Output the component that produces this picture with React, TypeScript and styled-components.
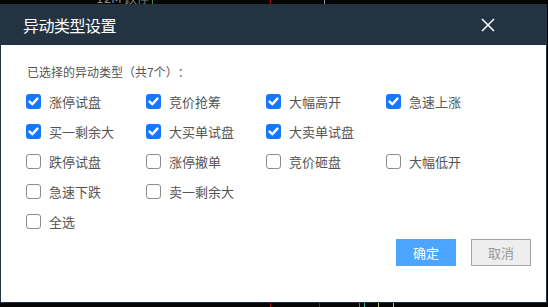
import React, {useState} from 'react';
import styled, {createGlobalStyle} from 'styled-components';

const GlobalStyle = createGlobalStyle`
  html, body {
    margin: 0;
    padding: 0;
    background: #000;
  }
  #root {
    width: 548px;
    height: 307px;
    overflow: hidden;
    font-family: "Noto Sans CJK SC", "Noto Sans", sans-serif;
    text-spacing-trim: space-all;
  }
`;

const Page = styled.div`
  display: flex;
  flex-direction: column;
  width: 548px;
  height: 307px;
  background: #000;
`;

// the quote grid behind the dialog only peeks out above and below it
const BackStrip = styled.div<{height: number}>`
  position: relative;
  height: ${props => props.height}px;
  overflow: hidden;
  background: #050505;
`;

const StripText = styled.span<{left: number}>`
  position: absolute;
  left: ${props => props.left}px;
  bottom: -1px;
  font-size: 12px;
  line-height: 12px;
  color: #8a8a8a;
  font-family: "DejaVu Sans", sans-serif;
`;

const StripMark = styled.span<{left: number; color: string}>`
  position: absolute;
  left: ${props => props.left}px;
  top: 0;
  width: 1px;
  height: 100%;
  background: ${props => props.color};
`;

const Dialog = styled.div`
  width: 547px;
  height: 299px;
  box-sizing: border-box;
  border: 1px solid #243342;
  border-top: none;
  display: flex;
  flex-direction: column;
  background: #fff;
`;

const Header = styled.div`
  height: 41px;
  flex: none;
  background: #243342;
  display: flex;
  align-items: center;
  justify-content: space-between;
  padding: 0 52px 0 23px;
  margin: 0 -1px;
`;

const Title = styled.div`
  color: #fff;
  font-size: 16px;
  line-height: 20px;
  letter-spacing: -0.5px;
`;

const CloseButton = styled.button`
  width: 14px;
  height: 14px;
  padding: 0;
  border: none;
  background: none;
  display: flex;
  cursor: pointer;
`;

const Body = styled.div`
  flex: 1;
  display: flex;
  flex-direction: column;
  padding: 19px 15px 0 25px;
`;

const Caption = styled.div`
  font-size: 12px;
  line-height: 16px;
  color: #555;
  padding-left: 1px;
`;

const OptionGrid = styled.div`
  display: grid;
  grid-template-columns: repeat(4, 120px);
  grid-auto-rows: 30px;
  margin-top: 6px;
`;

const Option = styled.label<{newRow?: boolean}>`
  display: flex;
  align-items: center;
  gap: 8px;
  font-size: 13px;
  color: #555;
  cursor: pointer;
  user-select: none;
  grid-column: ${props => props.newRow ? '1' : 'auto'};
`;

const Box = styled.span<{checked: boolean}>`
  width: 15px;
  height: 15px;
  box-sizing: border-box;
  border-radius: 3px;
  flex: none;
  display: flex;
  align-items: center;
  justify-content: center;
  background: ${props => props.checked ? '#1677ff' : '#fff'};
  border: ${props => props.checked ? 'none' : '1.5px solid #8c8c8c'};
`;

const Footer = styled.div`
  display: flex;
  justify-content: flex-end;
  gap: 15px;
  margin-top: 3px;
`;

const Button = styled.button<{primary?: boolean}>`
  width: 60px;
  height: 27px;
  box-sizing: border-box;
  font-family: inherit;
  font-size: 13px;
  padding: 0;
  cursor: pointer;
  border: ${props => props.primary ? 'none' : '1px solid #a6a6a6'};
  background: ${props => props.primary ? '#4ca6ff' : '#eeeeee'};
  color: ${props => props.primary ? '#fff' : '#999'};
`;

const options = [
  '涨停试盘', '竞价抢筹', '大幅高开', '急速上涨',
  '买一剩余大', '大买单试盘', '大卖单试盘', '',
  '跌停试盘', '涨停撤单', '竞价砸盘', '大幅低开',
  '急速下跌', '卖一剩余大',
];

const initialChecked = ['涨停试盘', '竞价抢筹', '大幅高开', '急速上涨', '买一剩余大', '大买单试盘', '大卖单试盘'];

const CheckMark: React.FC = () => (
  <svg width="11" height="11" viewBox="0 0 11 11">
    <path d="M1.6 5.6 L4.3 8.2 L9.4 2.6" fill="none" stroke="#fff" strokeWidth="2.4" strokeLinecap="round" strokeLinejoin="round" />
  </svg>
);

const Checkbox: React.FC<{label: string; checked: boolean; newRow?: boolean; onToggle: () => void}> = ({label, checked, newRow, onToggle}) => (
  <Option newRow={newRow} onClick={onToggle}>
    <Box checked={checked}>{checked && <CheckMark />}</Box>
    {label}
  </Option>
);

const App: React.FC = () => {
  const [checked, setChecked] = useState<string[]>(initialChecked);

  const toggle = (name: string): void => {
    setChecked(prev => prev.includes(name) ? prev.filter(n => n !== name) : [...prev, name]);
  };

  const allNames = options.filter(o => o);
  const allChecked = allNames.every(n => checked.includes(n));

  return (
    <Page>
      <GlobalStyle />
      <BackStrip height={4}>
        <StripText left={96}>12M</StripText>
        <StripText left={125}>跌停</StripText>
        <StripMark left={152} color="#3a8a3a" />
        <StripMark left={270} color="#a01010" />
        <StripMark left={324} color="#8a94a8" />
      </BackStrip>
      <Dialog>
        <Header>
          <Title>异动类型设置</Title>
          <CloseButton aria-label="关闭">
            <svg width="14" height="14" viewBox="0 0 14 14">
              <path d="M1 1 L13 13 M13 1 L1 13" stroke="#fff" strokeWidth="1.5" />
            </svg>
          </CloseButton>
        </Header>
        <Body>
          <Caption>已选择的异动类型（共{checked.length}个）：</Caption>
          <OptionGrid>
            {options.map((name, i) => name
              ? <Checkbox key={name} label={name} checked={checked.includes(name)} onToggle={() => toggle(name)} />
              : <span key={`gap-${i}`} />)}
            <Checkbox
              label="全选"
              newRow
              checked={allChecked}
              onToggle={() => setChecked(allChecked ? [] : allNames)}
            />
          </OptionGrid>
          <Footer>
            <Button primary>确定</Button>
            <Button>取消</Button>
          </Footer>
        </Body>
      </Dialog>
      <BackStrip height={4}>
        <StripMark left={270} color="#a01010" />
        <StripMark left={319} color="#a01010" />
        <StripMark left={359} color="#c05020" />
        <StripMark left={364} color="#40a0a0" />
        <StripMark left={378} color="#c0c080" />
        <StripMark left={393} color="#c0c080" />
      </BackStrip>
    </Page>
  );
};

export default App;
